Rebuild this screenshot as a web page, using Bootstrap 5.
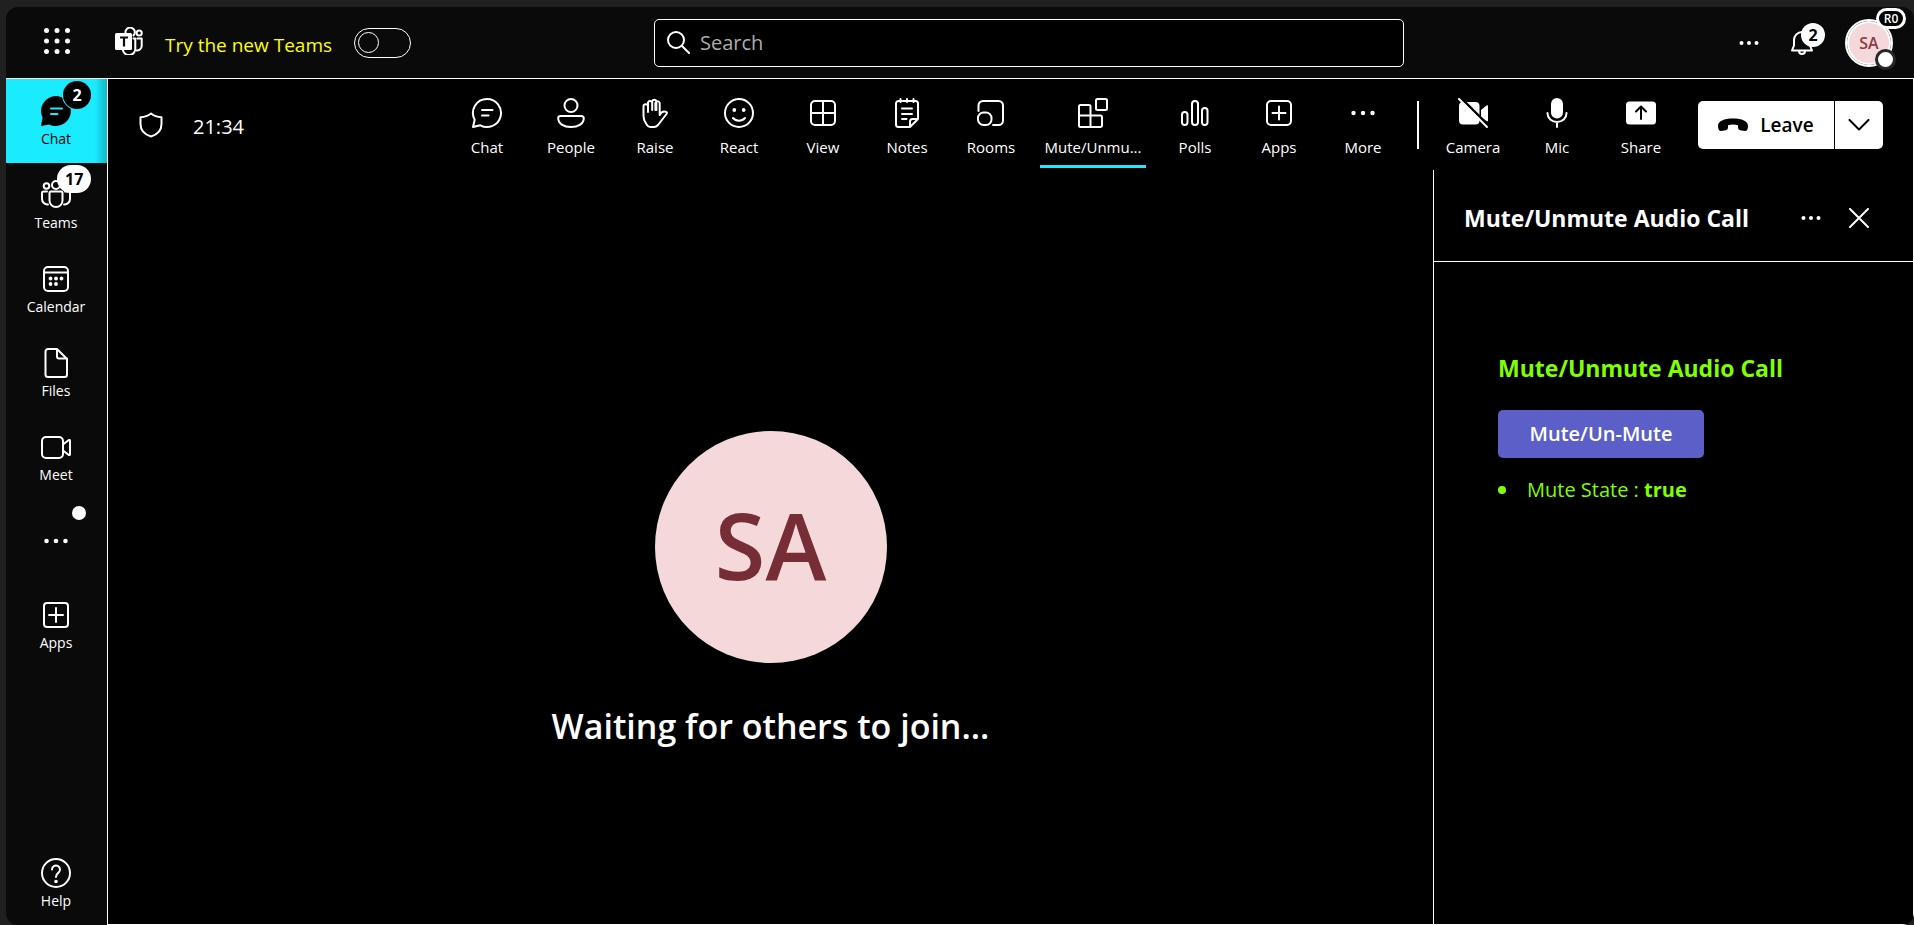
<!DOCTYPE html>
<html lang="en">
<head>
<meta charset="utf-8">
<meta name="viewport" content="width=device-width, initial-scale=1">
<title>Meeting</title>
<link href="https://cdn.jsdelivr.net/npm/bootstrap@5.3.0/dist/css/bootstrap.min.css" rel="stylesheet">
<style>
  :root { --ui-font: "Segoe UI", "Open Sans", "Noto Sans", sans-serif; --cyan: #1aebff; --lime: #7fff00; --chrome: #0a0a0a; }
  body { font-family: var(--ui-font); background: #202020; color: #fff; }
  button, input { font-family: inherit; }
  svg { display: block; fill: none; stroke: currentColor; stroke-width: 2; stroke-linecap: round; stroke-linejoin: round; flex-shrink: 0; }
  svg .solid { fill: currentColor; stroke: none; }
  .icon-btn { background: none; border: 0; padding: 0; color: #fff; }

  .app-frame { min-height: 100vh; padding: 7px 0 0 6px; }
  .app-window { background: var(--chrome); border-radius: 12px; overflow: hidden; }

  .top-bar { height: 72px; border-bottom: 1px solid #fff; }
  .top-left { flex: 648 1 0; min-width: 0; }
  .top-right { flex: 493 1 0; min-width: 0; padding-right: 17px; }
  .launcher { width: 101px; }
  .try-label { margin: 0 22px; color: #ff0; font-size: 19px; line-height: 28px; }
  .try-switch { appearance: none; display: flex; align-items: center; width: 57px; height: 30px; margin: 0; padding: 3px; border: 1px solid #fff; border-radius: 15px; background: none; }
  .try-switch::before { content: ""; width: 21px; height: 21px; border: 1px solid #fff; border-radius: 50%; }
  .search-box { flex: 0 1 750px; height: 48px; border: 1px solid #fff; border-radius: 5px; background: #000; padding: 0 12px; gap: 10px; }
  .search-box input { background: none; border: 0; outline: 0; padding: 0; color: #fff; font-size: 20px; line-height: 28px; }
  .search-box input::placeholder { color: #adadad; opacity: 1; }

  .count-pill { position: absolute; display: flex; align-items: center; justify-content: center; border-radius: 14px; background: #fff; color: #000; font-weight: 700; line-height: 20px; }
  .bell-count { width: 24px; height: 24px; left: 10px; top: -8px; font-size: 16px; }
  .profile { width: 48px; height: 48px; border-radius: 50%; border: 2px solid #fff; background: #f4d8da; background-clip: content-box; box-shadow: inset 0 0 0 2px #fff; padding: 1px; color: #8b3a44; font-size: 16px; font-weight: 600; line-height: 24px; }
  .profile-tag { position: absolute; left: 31px; top: -11px; width: 30px; height: 21px; border: 3px solid #fff; border-radius: 11px; background: #000; color: #fff; font-size: 12px; font-weight: 600; line-height: 15px; text-align: center; }
  .profile-dot { position: absolute; left: 30px; top: 30px; width: 21px; height: 21px; border: 3px solid #272727; border-radius: 50%; background: #fff; }

  .side-rail { width: 102px; border-right: 1px solid #fff; }
  .rail-link { position: relative; display: flex; flex-direction: column; align-items: center; height: 84px; padding: 16px 1px 0 0; gap: 2px; color: #fff; text-decoration: none; font-size: 14px; line-height: 20px; }
  .rail-link.rail-more { justify-content: center; padding-top: 0; }
  .rail-link.is-on { background: linear-gradient(to left, #14b6c6, var(--cyan) 12px); color: #000; }
  .rail-count { left: 51px; top: 2px; height: 28px; min-width: 28px; padding: 0 8px; font-size: 16px; }
  .is-on .rail-count { left: 57px; background: #000; color: #fff; box-shadow: 0 0 0 1px var(--cyan); }
  .rail-dot { position: absolute; left: 66px; top: 7px; width: 14px; height: 14px; border-radius: 50%; background: #fff; }

  .work-area { background: #000; border-right: 1px solid #fff; border-bottom: 1px solid #fff; min-height: calc(100vh - 79px); }
  .call-bar { height: 91px; padding: 0 30px 0 31px; }
  .call-time { margin-left: 30px; font-size: 20px; line-height: 28px; }
  .tool-set { gap: 14px; }
  .tool { width: 70px; height: 91px; padding: 18px 0 0; border: 0; border-bottom: 3px solid transparent; background: none; color: #fff; display: flex; flex-direction: column; align-items: center; gap: 7px; font-size: 15px; line-height: 22px; }
  .tool.is-on { width: 106px; height: 89px; align-self: flex-start; border-bottom-color: var(--cyan); }
  .tool-rule { width: 2px; height: 48px; margin: 0 19px; background: #fff; }
  .leave-btn { width: 185px; height: 48px; margin-left: 22px; border-radius: 5px; background: #fff; color: #000; overflow: hidden; }
  .leave-btn button { background: none; border: 0; color: #000; padding: 0; display: flex; align-items: center; justify-content: center; gap: 12px; font-size: 19px; font-weight: 600; line-height: 28px; }
  .leave-btn button + button { width: 49px; border-left: 1px solid #000; }

  .stage { display: grid; grid-template-rows: 1fr auto 1fr; justify-items: center; }
  .stage-avatar { grid-row: 2; width: 232px; height: 232px; padding-bottom: 4px; border-radius: 50%; background: #f4d8da; color: #762d36; font-size: 92px; font-weight: 600; line-height: 120px; }
  .stage-text { grid-row: 3; font-size: 34px; font-weight: 600; line-height: 48px; padding-top: 39px; }

  .side-panel { width: 480px; border-left: 1px solid #fff; }
  .panel-head { height: 92px; padding: 4px 44px 0 30px; border-bottom: 1px solid #fff; }
  .panel-title { font-size: 23px; font-weight: 700; line-height: 32px; }
  .panel-body { padding: 90px 64px; color: var(--lime); }
  .mute-btn { width: 206px; height: 48px; margin-top: 26px; border: 0; border-radius: 5px; background: #5b5fc7; color: #fff; font-size: 20px; font-weight: 600; }
  .state-list { list-style: none; font-size: 20px; line-height: 32px; }
  .state-list li { display: flex; align-items: center; gap: 21px; }
  .state-list li::before { content: ""; width: 8px; height: 8px; border-radius: 50%; background: var(--lime); }
</style>
</head>
<body>
<div class="app-frame">
<div class="app-window">

  <header class="top-bar d-flex align-items-center">
    <div class="top-left d-flex align-items-center">
      <div class="launcher d-flex justify-content-center">
        <button class="icon-btn mb-1" aria-label="App launcher">
          <svg width="28" height="28" viewBox="0 0 28 28"><g class="solid"><circle cx="3.5" cy="3.5" r="2.5"/><circle cx="14" cy="3.5" r="2.5"/><circle cx="24.5" cy="3.5" r="2.5"/><circle cx="3.5" cy="14" r="2.5"/><circle cx="14" cy="14" r="2.5"/><circle cx="24.5" cy="14" r="2.5"/><circle cx="3.5" cy="24.5" r="2.5"/><circle cx="14" cy="24.5" r="2.5"/><circle cx="24.5" cy="24.5" r="2.5"/></g></svg>
        </button>
      </div>
      <svg class="ms-2 mb-1" width="28" height="28" viewBox="0 0 28 28" stroke-width="1.5">
        <path d="M10.500 6a4.700 4.700 0 1 1 8 2.500"/><circle cx="24.200" cy="6" r="2.600"/>
        <path d="M18.500 11.500h1.800v9.800a6.300 6.300 0 0 1-12.400 2M22.500 11.500h4.200v7.500a4.500 4.500 0 0 1-5 4.400"/>
        <rect class="solid" x="0" y="6" width="17" height="17" rx="1.500"/>
        <path d="M5 10.500h8M9 10.500v9" stroke="#0a0a0a" stroke-width="2.200" stroke-linecap="butt"/>
      </svg>
      <label class="try-label text-nowrap pt-1" for="tryNew">Try the new Teams</label>
      <input class="try-switch" type="checkbox" role="switch" id="tryNew">
    </div>
    <div class="search-box d-flex align-items-center">
      <svg width="23" height="23" viewBox="0 0 23 23" stroke-width="1.5"><circle cx="9" cy="9" r="8"/><path d="M15 15l7 7"/></svg>
      <input class="flex-grow-1" type="text" placeholder="Search" aria-label="Search">
    </div>
    <div class="top-right d-flex align-items-center justify-content-end">
      <button class="icon-btn" aria-label="Settings and more"><svg width="20" height="6" viewBox="0 0 20 6"><g class="solid"><circle cx="2.500" cy="3" r="2"/><circle cx="10" cy="3" r="2"/><circle cx="17.500" cy="3" r="2"/></g></svg></button>
      <button class="icon-btn position-relative ms-4" aria-label="Activity, 2 new">
        <svg class="ms-2" width="22" height="24" viewBox="0 0 22 24" stroke-width="1.5"><path d="M11 1a8 8 0 0 0-8 8v5.500L1 19.500h20l-2-5V9a8 8 0 0 0-8-8zM8 20a3 3 0 0 0 6 0"/></svg>
        <span class="count-pill bell-count ms-2">2</span>
      </button>
      <div class="position-relative ms-4 me-1">
        <button class="profile ms-2 d-flex align-items-center justify-content-center" aria-label="Profile">SA</button>
        <span class="profile-tag ms-2">R0</span>
        <span class="profile-dot ms-2"></span>
      </div>
    </div>
  </header>

  <div class="d-flex">
    <nav class="side-rail d-flex flex-column flex-shrink-0">
      <a class="rail-link is-on" href="#">
        <svg width="32" height="32" viewBox="0 0 32 32"><path fill="currentColor" stroke="none" d="M16 1a15 15 0 1 1-6.900 28.400L1 31l1.600-8.200A15 15 0 0 1 16 1z"/><path d="M11 13.500h11M11 19h6.500" stroke="#1aebff"/></svg>
        <span>Chat</span><span class="count-pill rail-count">2</span>
      </a>
      <a class="rail-link" href="#">
        <svg width="32" height="32" viewBox="0 0 32 32"><circle cx="6.500" cy="7" r="2.800"/><circle cx="16" cy="6" r="4"/><circle cx="25.500" cy="7" r="2.800"/><path d="M11 12.500h10a1.500 1.500 0 0 1 1.500 1.500v7.500a6.500 6.500 0 0 1-13 0V14a1.500 1.500 0 0 1 1.500-1.500zM7 12.500H3.500A1.500 1.500 0 0 0 2 14v6a5.500 5.500 0 0 0 6 5.400M25 12.500h3.500A1.500 1.500 0 0 1 30 14v6a5.500 5.500 0 0 1-6 5.400"/></svg>
        <span>Teams</span><span class="count-pill rail-count">17</span>
      </a>
      <a class="rail-link" href="#">
        <svg width="32" height="32" viewBox="0 0 32 32"><rect x="4" y="4" width="24" height="24" rx="4"/><path d="M4 9.500h24"/><g class="solid"><circle cx="10.500" cy="15.500" r="1.900"/><circle cx="16" cy="15.500" r="1.900"/><circle cx="21.500" cy="15.500" r="1.900"/><circle cx="10.500" cy="21" r="1.900"/><circle cx="16" cy="21" r="1.900"/></g></svg>
        <span>Calendar</span>
      </a>
      <a class="rail-link" href="#">
        <svg width="32" height="32" viewBox="0 0 32 32"><path d="M8 2h9l10 10v15.500a2.500 2.500 0 0 1-2.500 2.500H8a2.500 2.500 0 0 1-2.500-2.500v-23A2.500 2.500 0 0 1 8 2zM17 2v7.500a2 2 0 0 0 2 2h8"/></svg>
        <span>Files</span>
      </a>
      <a class="rail-link" href="#">
        <svg width="32" height="32" viewBox="0 0 32 32"><rect x="2" y="6" width="21" height="21" rx="4"/><path d="M23 13.500l5.500-4.300q1.500-.8 1.500.8v13q0 1.600-1.500.8L23 19.500"/></svg>
        <span>Meet</span>
      </a>
      <a class="rail-link rail-more" href="#" aria-label="More apps">
        <svg width="24" height="6" viewBox="0 0 24 6"><g class="solid"><circle cx="2.500" cy="3" r="2.300"/><circle cx="12" cy="3" r="2.300"/><circle cx="21.500" cy="3" r="2.300"/></g></svg>
        <span class="rail-dot"></span>
      </a>
      <a class="rail-link" href="#">
        <svg width="32" height="32" viewBox="0 0 32 32"><rect x="4" y="4" width="24" height="24" rx="3"/><path d="M16 9v14M9 16h14"/></svg>
        <span>Apps</span>
      </a>
      <a class="rail-link mt-auto" href="#">
        <svg width="32" height="32" viewBox="0 0 32 32"><circle cx="16" cy="16" r="14"/><path d="M12 12.500a4 4 0 1 1 6.500 3.100c-1.600 1.300-2.500 2-2.500 4.400"/><circle class="solid" cx="16" cy="24.500" r="1.800"/></svg>
        <span>Help</span>
      </a>
    </nav>

    <main class="work-area flex-grow-1 d-flex flex-column">
      <div class="call-bar d-flex align-items-center">
        <svg width="24" height="26" viewBox="0 0 24 26"><path d="M12 1.500C9 4 6 5 1.500 5.300V12c0 6.500 4 10.500 10.500 12.500C18.500 22.500 22.500 18.500 22.500 12V5.300C18 5 15 4 12 1.500z"/></svg>
        <span class="call-time me-auto pt-1">21:34</span>
        <div class="tool-set d-flex">
          <button class="tool"><svg width="32" height="32" viewBox="0 0 32 32"><path d="M16 2a14 14 0 1 1-6.700 26.300L2 30l1.700-7.300A14 14 0 0 1 16 2zM11 13h10.500M11 18.500h6.500"/></svg>Chat</button>
          <button class="tool"><svg width="32" height="32" viewBox="0 0 32 32"><circle cx="16" cy="8.500" r="6.500"/><path d="M5.500 19h21a2.300 2.300 0 0 1 2.300 2.300c0 5.200-5.300 8.700-12.800 8.700S3.200 26.500 3.200 21.300A2.300 2.300 0 0 1 5.500 19z"/></svg>People</button>
          <button class="tool"><svg width="32" height="32" viewBox="0 0 32 32"><path d="M9 15V9.500a2.200 2.200 0 0 0-4.500 0V19c0 5 2 6.500 3.500 9 .8 1.400 2 2 3.500 2h3.500c2 0 3-.8 4-2l8.500-11c.8-1 .5-2-.8-2.300-2.700-.5-5 1-6 3.300V6a2.200 2.200 0 0 0-4.300 0v7M9 14V5.500a2.200 2.200 0 0 1 4.200 0V13M13.200 12V4.200a2.200 2.200 0 0 1 4.200 0V13"/></svg>Raise</button>
          <button class="tool"><svg width="32" height="32" viewBox="0 0 32 32"><circle cx="16" cy="16" r="14"/><path d="M10 21c3 3.600 9 3.600 12 0"/><circle class="solid" cx="11.300" cy="13" r="1.900"/><circle class="solid" cx="20.700" cy="13" r="1.900"/></svg>React</button>
          <button class="tool"><svg width="32" height="32" viewBox="0 0 32 32"><rect x="4" y="4" width="24" height="24" rx="4"/><path d="M16 4v24M4 16h24"/></svg>View</button>
          <button class="tool"><svg width="32" height="32" viewBox="0 0 32 32"><path d="M7.500 4h17A2.500 2.500 0 0 1 27 6.500V22l-8 8H7.500A2.500 2.500 0 0 1 5 27.500v-21A2.500 2.500 0 0 1 7.500 4zM27 22h-5.500a2.500 2.500 0 0 0-2.500 2.500V30M9.500 2v3M16 2v3M22.500 2v3M11 11.500h10M11 17h10M11 22h4.500"/></svg>Notes</button>
          <button class="tool"><svg width="32" height="32" viewBox="0 0 32 32"><path d="M3.500 14V8.500A4.500 4.500 0 0 1 8 4h15.500A4.500 4.500 0 0 1 28 8.500v15a4.500 4.500 0 0 1-4.500 4.500H18"/><rect x="3" y="15.500" width="13.500" height="12.500" rx="5.500"/></svg>Rooms</button>
          <button class="tool is-on text-nowrap"><svg width="32" height="32" viewBox="0 0 32 32"><path d="M3.500 8H12a1.500 1.500 0 0 1 1.500 1.500v20.500M3.500 8A1.500 1.500 0 0 0 2 9.500v19A1.500 1.500 0 0 0 3.500 30h20a1.500 1.500 0 0 0 1.500-1.500v-8.500a1.500 1.500 0 0 0-1.500-1.500H2"/><rect x="19" y="2" width="11" height="11" rx="1.500"/></svg>Mute/Unmu...</button>
          <button class="tool"><svg width="32" height="32" viewBox="0 0 32 32"><rect x="3" y="15" width="5.500" height="13" rx="2.700"/><rect x="13" y="4" width="6" height="24" rx="3"/><rect x="23" y="11" width="5.500" height="17" rx="2.700"/></svg>Polls</button>
          <button class="tool"><svg width="32" height="32" viewBox="0 0 32 32"><rect x="4" y="4" width="24" height="24" rx="4"/><path d="M16 9.500v13M9.500 16h13"/></svg>Apps</button>
          <button class="tool"><svg width="32" height="32" viewBox="0 0 32 32"><g class="solid"><circle cx="6.500" cy="16" r="2.200"/><circle cx="16" cy="16" r="2.200"/><circle cx="25.500" cy="16" r="2.200"/></g></svg>More</button>
        </div>
        <div class="tool-rule"></div>
        <div class="tool-set d-flex">
          <button class="tool"><svg width="32" height="32" viewBox="0 0 32 32"><path class="solid" d="M6 5h12.500A4 4 0 0 1 22.500 9v14.500A4 4 0 0 1 18.500 27.500H6A4 4 0 0 1 2 23.500V9a4 4 0 0 1 4-4zM24 13l5.500-4.500q1.500-1 1.500.8v14q0 1.800-1.500.8L24 20z"/><path d="M3.500 .5l28 28" stroke="#000" stroke-width="2.500"/><path d="M2 2l28 28"/></svg>Camera</button>
          <button class="tool"><svg width="32" height="32" viewBox="0 0 32 32"><rect class="solid" x="10" y="1" width="12" height="20.500" rx="6"/><path d="M6.500 16v.500a9.500 8.500 0 0 0 19 0V16M16 25.500V30"/></svg>Mic</button>
          <button class="tool"><svg width="32" height="32" viewBox="0 0 32 32"><rect class="solid" x="1" y="4.500" width="30" height="23" rx="3.500"/><path d="M16 22V10.500M11 14.500l5-5 5 5" stroke="#000"/></svg>Share</button>
        </div>
        <div class="leave-btn d-flex flex-shrink-0">
          <button class="flex-grow-1"><svg width="30" height="14" viewBox="0 0 30 14"><path class="solid" d="M0 8C0 3 6 .5 15 .5S30 3 30 8c0 3-1 5-3 5l-4.800-.8c-1.400-.3-2.200-1.500-2.200-3V7.200c-3-1-7-1-10 0v2c0 1.500-.8 2.700-2.200 3L3 13C1 13 0 11 0 8z"/></svg>Leave</button>
          <button aria-label="Leave options"><svg width="22" height="12" viewBox="0 0 22 12" stroke-width="1.5"><path d="M1.500 1l9.500 9.500L20.500 1"/></svg></button>
        </div>
      </div>

      <div class="d-flex flex-grow-1">
        <section class="stage flex-grow-1">
          <div class="stage-avatar d-flex align-items-center justify-content-center">SA</div>
          <div class="stage-text text-nowrap">Waiting for others to join...</div>
        </section>
        <aside class="side-panel flex-shrink-0">
          <div class="panel-head d-flex align-items-center">
            <h2 class="panel-title text-nowrap m-0 me-auto">Mute/Unmute Audio Call</h2>
            <button class="icon-btn" aria-label="More options"><svg width="20" height="6" viewBox="0 0 20 6"><g class="solid"><circle cx="2.500" cy="3" r="2"/><circle cx="10" cy="3" r="2"/><circle cx="17.500" cy="3" r="2"/></g></svg></button>
            <button class="icon-btn ms-4 ps-1" aria-label="Close"><svg width="20" height="20" viewBox="0 0 20 20" stroke-width="1.5"><path d="M1 1l18 18M19 1L1 19"/></svg></button>
          </div>
          <div class="panel-body">
            <h3 class="panel-title text-nowrap m-0">Mute/Unmute Audio Call</h3>
            <button class="mute-btn">Mute/Un-Mute</button>
            <ul class="state-list p-0 m-0 mt-3"><li><span>Mute State : <strong>true</strong></span></li></ul>
          </div>
        </aside>
      </div>
    </main>
  </div>
</div>
</div>
<script src="https://cdn.jsdelivr.net/npm/bootstrap@5.3.0/dist/js/bootstrap.bundle.min.js"></script>
</body>
</html>
